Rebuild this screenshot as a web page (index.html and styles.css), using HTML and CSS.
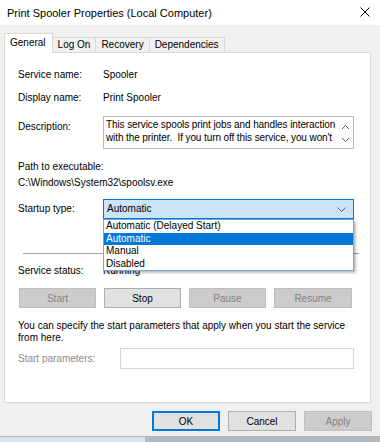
FILE: index.html
```html
<!DOCTYPE html>
<html lang="en">
  <head>
    <meta charset="UTF-8" />
    <title>Print Spooler Properties (Local Computer)</title>
    <link rel="stylesheet" href="styles.css">
  </head>
  <body>
    <div class="dialog">
      <div class="titlebar">
        <span class="title">Print Spooler Properties (Local Computer)</span>
        <svg class="close" width="10" height="10" viewBox="0 0 10 10">
          <path d="M0.5 0.5 L9.5 9.5 M9.5 0.5 L0.5 9.5" stroke="#000" stroke-width="1" fill="none" />
        </svg>
      </div>

      <div class="content">
        <!-- tabs -->
        <div class="tabs">
          <div class="tab active">General</div>
          <div class="tab">Log On</div>
          <div class="tab">Recovery</div>
          <div class="tab">Dependencies</div>
        </div>

        <div class="panel">
          <div class="row row-name">
            <span class="label">Service name:</span>
            <span>Spooler</span>
          </div>
          <div class="row row-display">
            <span class="label">Display name:</span>
            <span>Print Spooler</span>
          </div>
          <div class="row row-desc">
            <span class="label desc-label">Description:</span>
            <div class="desc-box">
              <div class="desc-text">
                <div class="desc-line">This service spools print jobs and handles interaction</div>
                <div class="desc-line">with the printer.&nbsp; If you turn off this service, you won't</div>
              </div>
              <div class="scroll">
                <svg width="9" height="6" viewBox="0 0 9 6"><path d="M1 5 L4.5 1.5 L8 5" stroke="#606060" fill="none" /></svg>
                <svg width="9" height="6" viewBox="0 0 9 6"><path d="M1 1 L4.5 4.5 L8 1" stroke="#606060" fill="none" /></svg>
              </div>
            </div>
          </div>

          <div class="path-label">Path to executable:</div>
          <div class="path-value">C:\Windows\System32\spoolsv.exe</div>

          <div class="row row-startup">
            <span class="label">Startup type:</span>
            <div class="combo-wrap">
              <div class="combo">
                <span>Automatic</span>
                <svg width="9" height="5" viewBox="0 0 9 5"><path d="M0.5 0.5 L4.5 4.5 L8.5 0.5" stroke="#606060" fill="none" /></svg>
              </div>
              <ul class="dropdown">
                <li>Automatic (Delayed Start)</li>
                <li class="selected">Automatic</li>
                <li>Manual</li>
                <li>Disabled</li>
              </ul>
            </div>
          </div>

          <div class="separator"></div>

          <div class="row row-status">
            <span class="label">Service status:</span>
            <span>Running</span>
          </div>

          <div class="service-buttons">
            <button class="btn" disabled>Start</button>
            <button class="btn">Stop</button>
            <button class="btn" disabled>Pause</button>
            <button class="btn" disabled>Resume</button>
          </div>

          <p class="hint">You can specify the start parameters that apply when you start the service from here.</p>

          <div class="row row-params">
            <span class="label params-label">Start parameters:</span>
            <div class="params-input"></div>
          </div>
        </div>

        <div class="footer">
          <button class="btn dlg-btn default">OK</button>
          <button class="btn dlg-btn">Cancel</button>
          <button class="btn dlg-btn" disabled>Apply</button>
        </div>
      </div>

      <div class="bottom-strip">
        <div class="strip-left"></div>
        <div class="strip-right"></div>
      </div>
    </div>
  </body>
</html>
```

FILE: styles.css
```css
/* Reset */
* {
  margin: 0;
  padding: 0;
  box-sizing: border-box;
  font-family: "Liberation Sans", Arial, sans-serif;
}

body {
  width: 380px;
  height: 442px;
  overflow: hidden;
  background-color: #f0f0f0;
  color: #000;
  font-size: 10px;
}

.dialog {
  width: 380px;
  height: 442px;
  display: flex;
  flex-direction: column;
}

/* Title bar */
.titlebar {
  height: 25px;
  background-color: #ffffff;
  display: flex;
  align-items: center;
  justify-content: space-between;
  padding: 0 10px 0 7px;
}

.title {
  font-size: 11px;
  color: #000;
}

.close {
  margin-top: -2px;
}

.content {
  flex: 1;
  padding: 8px 9px 0 4px;
}

/* Tabs */
.tabs {
  display: flex;
  align-items: flex-end;
  height: 19px;
  position: relative;
  z-index: 1;
}

.tab {
  height: 15px;
  padding: 0 5px;
  border: 1px solid #d9d9d9;
  border-bottom: none;
  background-color: #f0f0f0;
  display: flex;
  align-items: center;
  margin-left: -1px;
  line-height: 1;
}

.tab.active {
  height: 20px;
  margin-bottom: -1px;
  margin-left: 0;
  background-color: #ffffff;
  padding: 0 6px 2px 5px;
}

/* Panel */
.panel {
  height: 351px;
  background-color: #ffffff;
  border: 1px solid #d9d9d9;
  padding: 15px 0 0 13px;
}

.row {
  display: flex;
  align-items: center;
  line-height: 14px;
}

.label {
  width: 85px;
  flex-shrink: 0;
}

.row-display {
  margin-top: 9px;
}

.row-desc {
  margin-top: 11px;
  align-items: flex-start;
}

.desc-label {
  padding-top: 4px;
}

.desc-box {
  width: 251px;
  height: 33px;
  border: 1px solid #b9b9b9;
  display: flex;
  overflow: hidden;
}

.desc-text {
  flex: 1;
  min-width: 0;
  padding: 1px 0 0 2px;
  line-height: 13px;
  overflow: hidden;
}

.desc-line {
  white-space: nowrap;
  letter-spacing: -0.1px;
}

.scroll {
  width: 15px;
  flex-shrink: 0;
  display: flex;
  flex-direction: column;
  align-items: center;
  justify-content: space-between;
  padding: 7px 0 5px;
}

.path-label {
  margin-top: 11px;
  line-height: 14px;
}

.path-value {
  margin-top: 2px;
  line-height: 14px;
}

/* Startup combo */
.row-startup {
  margin-top: 9px;
}

.combo-wrap {
  position: relative;
}

.combo {
  width: 251px;
  height: 20px;
  border: 1px solid #0078d7;
  background-color: #cce4f7;
  display: flex;
  align-items: center;
  justify-content: space-between;
  padding: 0 7px 0 3px;
}

.dropdown {
  list-style: none;
  position: absolute;
  top: 20px;
  left: 0;
  width: 251px;
  background-color: #ffffff;
  border: 1px solid #7aa6d8;
  box-shadow: 2px 2px 2px rgba(0, 0, 0, 0.25);
  z-index: 2;
}

.dropdown li {
  height: 12.5px;
  line-height: 12px;
  padding-left: 2px;
}

.dropdown li.selected {
  background-color: #0078d7;
  color: #ffffff;
}

.separator {
  margin: 34px 0 0 5px;
  width: 336px;
  height: 1px;
  background-color: #a0a0a0;
}

.row-status {
  margin-top: 10px;
}

/* Service buttons */
.btn {
  height: 20px;
  font-size: 10px;
  background-color: #e1e1e1;
  border: 1px solid #adadad;
  color: #000;
}

.btn:disabled {
  background-color: #cccccc;
  border-color: #bfbfbf;
  color: #838383;
}

.service-buttons {
  display: flex;
  gap: 8px;
  margin-top: 10px;
  padding-left: 1px;
}

.service-buttons .btn {
  width: 77px;
}

.service-buttons .btn:last-child {
  width: 78px;
}

.hint {
  margin-top: 12px;
  line-height: 11.5px;
  width: 340px;
}

.row-params {
  margin-top: 5px;
}

.params-label {
  width: 102px;
  color: #8a8a8a;
}

.params-input {
  width: 234px;
  height: 21px;
  border: 1px solid #d7d7d7;
}

/* Footer buttons */
.footer {
  display: flex;
  justify-content: flex-end;
  gap: 8px;
  padding-top: 8px;
  margin-right: -1px;
}

.dlg-btn {
  width: 68px;
  height: 20px;
}

.dlg-btn.default {
  border: 2px solid #0078d7;
}

.bottom-strip {
  height: 6px;
  display: flex;
  border-top: 1px solid #9fb8d6;
}

.strip-left {
  width: 145px;
  background-color: #dfe3e8;
}

.strip-right {
  flex: 1;
  background-color: #b6b9bd;
}
```
